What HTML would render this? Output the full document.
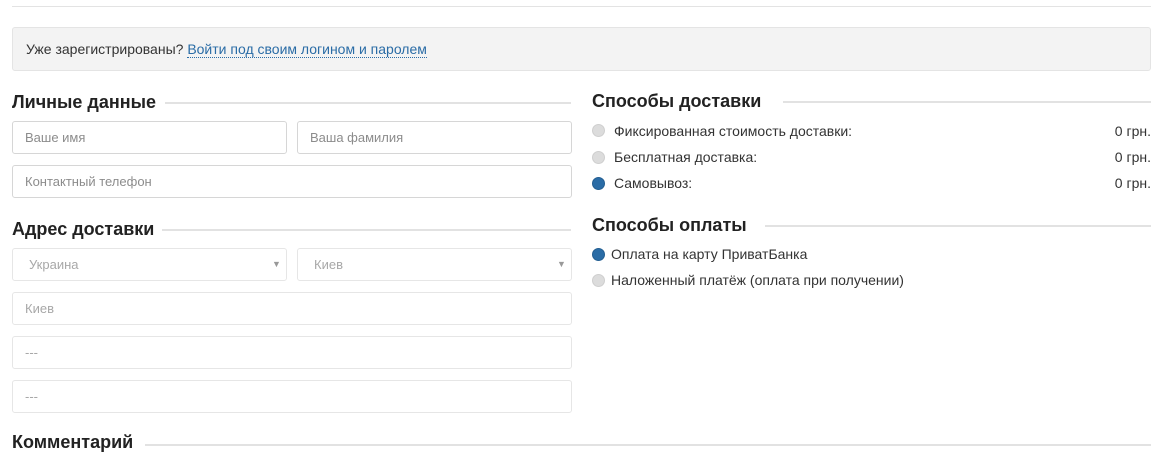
<!DOCTYPE html>
<html><head><meta charset="utf-8"><style>
*{box-sizing:border-box;margin:0;padding:0}
body{width:1161px;height:462px;background:#fff;font-family:"Liberation Sans","DejaVu Sans",sans-serif;color:#333;font-size:13px;position:relative;overflow:hidden}
.a{position:absolute}
.hr{position:absolute;height:2px;background:#e2e2e2}
.h{position:absolute;font-size:18px;font-weight:bold;color:#222;line-height:22px}
.in{position:absolute;height:33px;border:1px solid #d6d6d6;border-radius:3px;color:#8c8c8c;font-size:13px;line-height:31px;padding-left:12px;background:#fff}
.dis{border-color:#e6e6e6;color:#a8a8a8}
.rad{position:absolute;width:13px;height:13px;border-radius:50%;background:#dcdcdc;border:1px solid #cfcfcf}
.on{background:#2a6ca6;border-color:#245f92}
.t{position:absolute;font-size:14px;line-height:16px;color:#333}
.arr{position:absolute;font-size:9px;color:#999}
</style></head><body>
<div class="a" style="left:12px;top:6px;width:1139px;height:1px;background:#e3e3e3"></div>
<div class="a" style="left:12px;top:27px;width:1139px;height:44px;background:#f3f3f3;border:1px solid #e4e4e4;border-radius:3px"></div>
<div class="t" style="left:26px;top:41px">Уже зарегистрированы? <span style="color:#2a6ca6;border-bottom:1px dotted #2a6ca6">Войти под своим логином и паролем</span></div>

<div class="h" style="left:12px;top:91px">Личные данные</div>
<div class="hr" style="left:165px;top:102px;width:406px"></div>
<div class="in" style="left:12px;top:121px;width:275px">Ваше имя</div>
<div class="in" style="left:297px;top:121px;width:275px">Ваша фамилия</div>
<div class="in" style="left:12px;top:165px;width:560px">Контактный телефон</div>

<div class="h" style="left:12px;top:218px">Адрес доставки</div>
<div class="hr" style="left:162px;top:229px;width:409px"></div>
<div class="in dis" style="left:12px;top:248px;width:275px;padding-left:16px">Украина</div>
<div class="arr" style="left:272px;top:259px">▼</div>
<div class="in dis" style="left:297px;top:248px;width:275px;padding-left:16px">Киев</div>
<div class="arr" style="left:557px;top:259px">▼</div>
<div class="in dis" style="left:12px;top:292px;width:560px">Киев</div>
<div class="in dis" style="left:12px;top:336px;width:560px">---</div>
<div class="in dis" style="left:12px;top:380px;width:560px">---</div>

<div class="h" style="left:12px;top:431px">Комментарий</div>
<div class="hr" style="left:145px;top:444px;width:1006px"></div>

<div class="h" style="left:592px;top:90px">Способы доставки</div>
<div class="hr" style="left:783px;top:101px;width:368px"></div>
<div class="rad" style="left:592px;top:124px"></div><div class="t" style="left:614px;top:123px">Фиксированная стоимость доставки:</div><div class="t" style="right:10px;top:123px">0 грн.</div>
<div class="rad" style="left:592px;top:151px"></div><div class="t" style="left:614px;top:149px">Бесплатная доставка:</div><div class="t" style="right:10px;top:149px">0 грн.</div>
<div class="rad on" style="left:592px;top:177px"></div><div class="t" style="left:614px;top:175px">Самовывоз:</div><div class="t" style="right:10px;top:175px">0 грн.</div>

<div class="h" style="left:592px;top:214px">Способы оплаты</div>
<div class="hr" style="left:765px;top:225px;width:386px"></div>
<div class="rad on" style="left:592px;top:248px"></div><div class="t" style="left:611px;top:246px">Оплата на карту ПриватБанка</div>
<div class="rad" style="left:592px;top:274px"></div><div class="t" style="left:611px;top:272px">Наложенный платёж (оплата при получении)</div>
</body></html>
